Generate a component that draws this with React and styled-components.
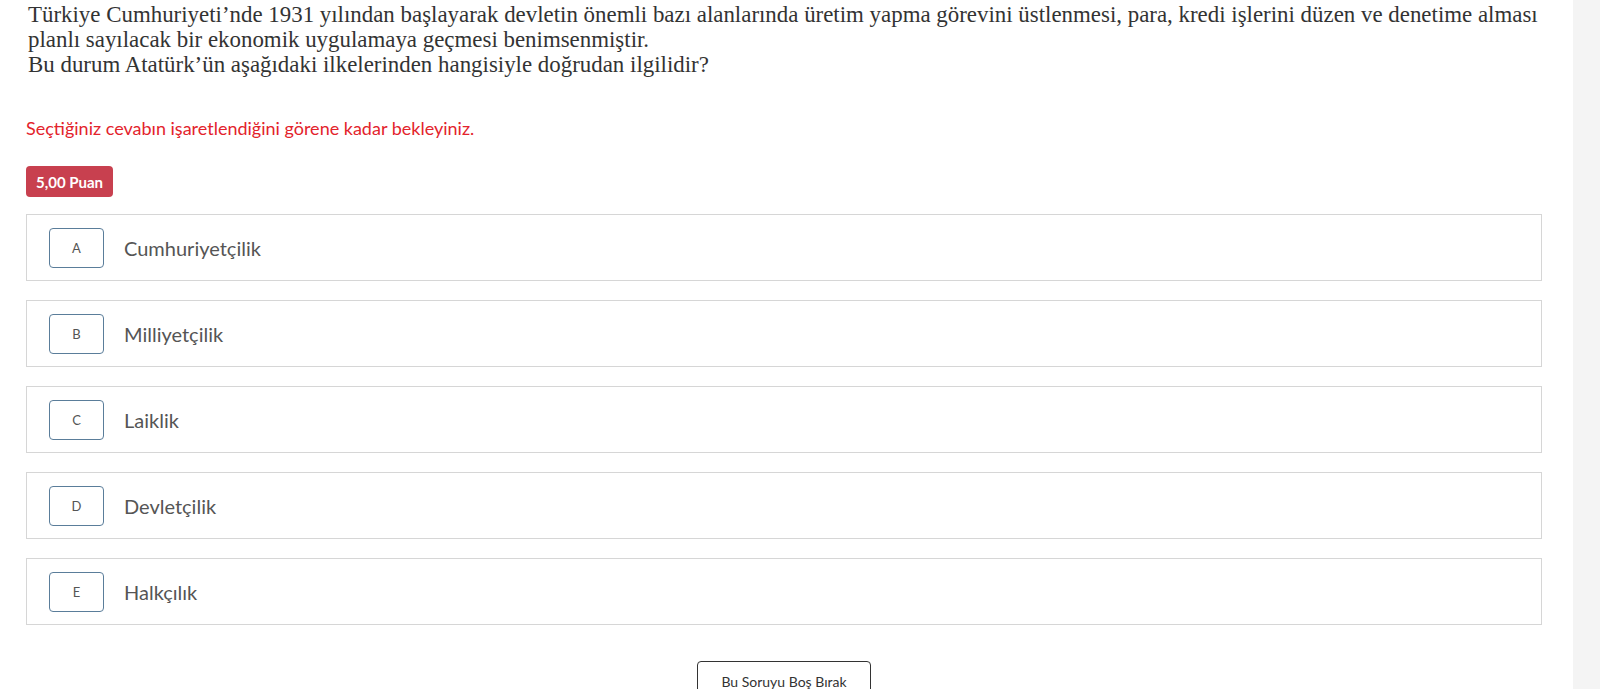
import styled, { createGlobalStyle } from 'styled-components';

const GlobalStyle = createGlobalStyle`
    body {
        margin: 0;
        background: #ffffff;
    }
`;

const options = [
    { letter: 'A', text: 'Cumhuriyetçilik' },
    { letter: 'B', text: 'Milliyetçilik' },
    { letter: 'C', text: 'Laiklik' },
    { letter: 'D', text: 'Devletçilik' },
    { letter: 'E', text: 'Halkçılık' },
];

function App () {

    return (
        <>
            <GlobalStyle />
            <Page>
                <Main>
                    <Question>
                        Türkiye Cumhuriyeti’nde 1931 yılından başlayarak devletin önemli bazı alanlarında üretim yapma görevini üstlenmesi, para, kredi işlerini düzen ve denetime alması<br />
                        planlı sayılacak bir ekonomik uygulamaya geçmesi benimsenmiştir.<br />
                        Bu durum Atatürk’ün aşağıdaki ilkelerinden hangisiyle doğrudan ilgilidir?
                    </Question>
                    <Warning>Seçtiğiniz cevabın işaretlendiğini görene kadar bekleyiniz.</Warning>
                    <Score>5,00 Puan</Score>
                    <OptionList>
                        {options.map(option => (
                            <Option key={option.letter}>
                                <Letter>{option.letter}</Letter>
                                <OptionText>{option.text}</OptionText>
                            </Option>
                        ))}
                    </OptionList>
                    <Actions>
                        <SkipButton>Bu Soruyu Boş Bırak</SkipButton>
                    </Actions>
                </Main>
                <Side />
            </Page>
        </>
    );

}

export default App;

const Page = styled.div`
    display: flex;
    height: 689px;
    overflow: hidden;
`;

const Main = styled.div`
    width: 1573px;
    box-sizing: border-box;
    padding: 2px 31px 0 26px;
    display: flex;
    flex-direction: column;
    align-items: flex-start;

    & > * {
        flex-shrink: 0;
    }
`;

const Side = styled.div`
    flex: 1;
    background: #f4f4f4;
`;

const Question = styled.div`
    margin-left: 2px;
    font-family: 'Liberation Serif', serif;
    font-size: 22.9px;
    line-height: 25px;
    color: #333333;
    white-space: nowrap;
`;

const Warning = styled.div`
    margin-top: 39px;
    font-family: 'Lato', sans-serif;
    font-size: 18px;
    line-height: 24px;
    color: #e3232c;
`;

const Score = styled.div`
    margin-top: 26px;
    height: 31px;
    padding: 0 10px;
    display: flex;
    align-items: center;
    background: #c8404f;
    border-radius: 4px;
    font-family: 'Lato', sans-serif;
    font-weight: 700;
    font-size: 15px;
    color: #ffffff;
`;

const OptionList = styled.div`
    margin-top: 17px;
    align-self: stretch;
    display: flex;
    flex-direction: column;
    gap: 19px;
`;

const Option = styled.div`
    height: 67px;
    box-sizing: border-box;
    border: 1px solid #d6d6d6;
    display: flex;
    align-items: center;
    padding-left: 22px;
`;

const Letter = styled.div`
    width: 55px;
    height: 40px;
    box-sizing: border-box;
    border: 1px solid #5a7d9a;
    border-radius: 4px;
    display: flex;
    align-items: center;
    justify-content: center;
    font-family: 'Lato', sans-serif;
    font-size: 13px;
    color: #555555;
`;

const OptionText = styled.div`
    margin-left: 20px;
    font-family: 'Lato', sans-serif;
    font-size: 20px;
    color: #555555;
`;

const Actions = styled.div`
    align-self: stretch;
    margin-top: 36px;
    display: flex;
    justify-content: center;
`;

const SkipButton = styled.div`
    width: 174px;
    height: 40px;
    box-sizing: border-box;
    border: 1px solid #333333;
    border-radius: 4px;
    display: flex;
    align-items: center;
    justify-content: center;
    font-family: 'Lato', sans-serif;
    font-size: 14px;
    color: #333333;
`;
